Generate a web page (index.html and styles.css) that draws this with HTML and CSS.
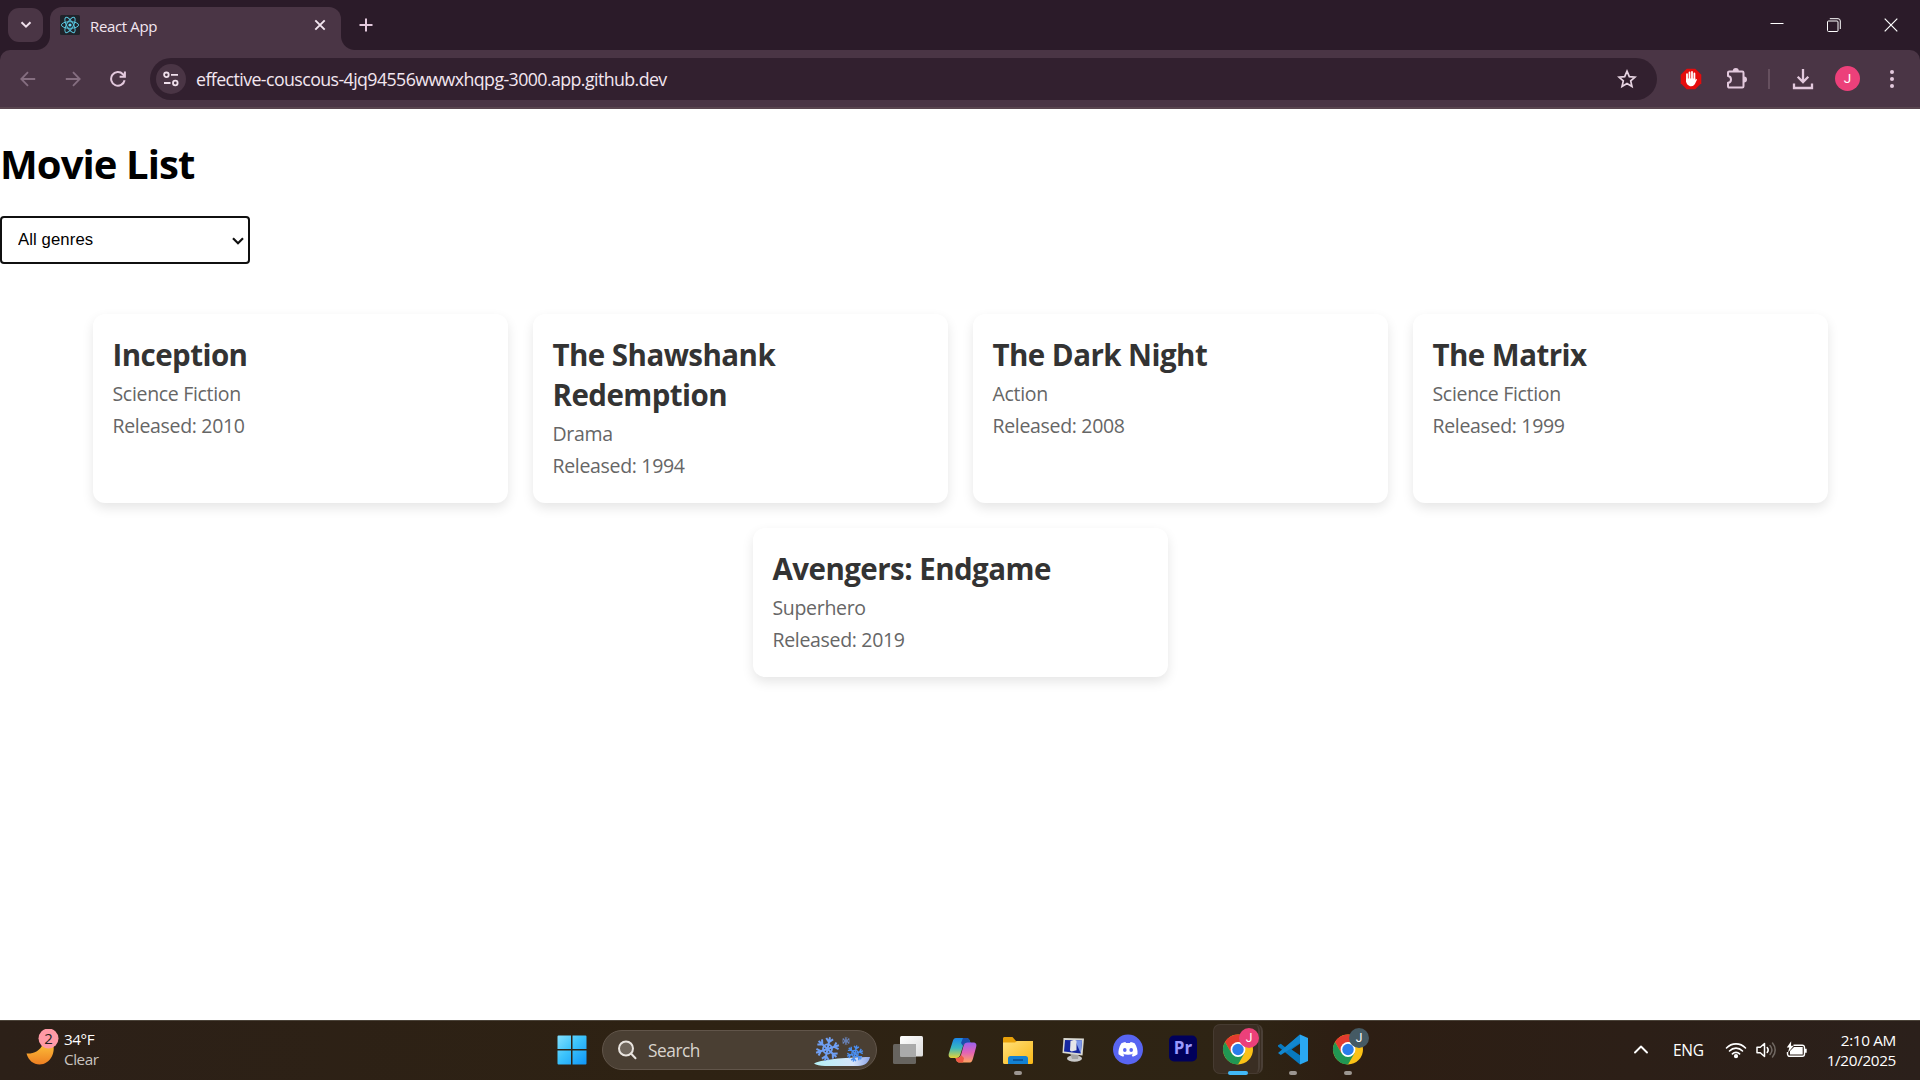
FILE: index.html
```html
<!DOCTYPE html>
<html lang="en">
<head>
<meta charset="utf-8">
<title>React App</title>
<link rel="stylesheet" href="styles.css">
</head>
<body>
<div class="screen">
<header class="tabstrip">
  <div class="tab-search"><svg width="12" height="8" viewBox="0 0 12 8" fill="none" stroke="#f0e0ec" stroke-width="2"><path d="M1.5 1.2 6 5.7l4.5-4.5"/></svg></div>
  <div class="tab">
    <svg class="favicon" width="20" height="20" viewBox="0 0 20 20" fill="none" stroke="#58c4dc"><rect width="20" height="20" rx="1.5" fill="#20232a" stroke="none"/><g stroke-width="1"><ellipse cx="10" cy="10" rx="8.6" ry="3.3"/><ellipse cx="10" cy="10" rx="8.6" ry="3.3" transform="rotate(60 10 10)"/><ellipse cx="10" cy="10" rx="8.6" ry="3.3" transform="rotate(120 10 10)"/></g><circle cx="10" cy="10" r="1.6" fill="#61dafb" stroke="none"/></svg>
    <span class="tab-title">React App</span>
    <svg width="12" height="12" viewBox="0 0 12 12" stroke="#f3e6f0" stroke-width="1.9"><path d="m1.3 1.3 9.4 9.4m0-9.4-9.4 9.4"/></svg>
  </div>
  <svg class="new-tab" width="14" height="14" viewBox="0 0 14 14" stroke="#e3c9dd" stroke-width="2"><path d="M7 .5v13M.5 7h13"/></svg>
  <div class="window-controls">
    <svg width="14" height="14" viewBox="0 0 14 14" stroke="#fff"><path d="M.5 5.500h13"/></svg>
    <svg width="14" height="14" viewBox="0 0 14 14" fill="none" stroke="#fff"><rect x=".5" y="3" width="10.5" height="10.5" rx="1"/><path d="M2.8.7h8.2a2.3 2.3 0 0 1 2.3 2.3v8"/></svg>
    <svg width="14" height="14" viewBox="0 0 14 14" stroke="#fff" stroke-width="1.2"><path d="m.7.7 12.6 12.6m0-12.6L.7 13.3"/></svg>
  </div>
</header>
<nav class="toolbar">
  <svg class="nav-icon" width="16" height="16" viewBox="0 0 16 16" fill="none" stroke="#856e80" stroke-width="1.8"><path d="M15.2 8H1.6M8 1.2 1.3 8 8 14.8"/></svg>
  <svg class="nav-icon" width="16" height="16" viewBox="0 0 16 16" fill="none" stroke="#856e80" stroke-width="1.8"><path d="M.8 8h13.6M8 1.2 14.7 8 8 14.8"/></svg>
  <svg class="nav-icon" width="16" height="16" viewBox="0 0 16 16" fill="none" stroke="#e3c9dd" stroke-width="2"><path d="M14.6 9.2A6.8 6.8 0 1 1 12.9 3.2L14.5 5M14.9.5v5.3H9.6"/></svg>
  <div class="omnibox">
    <div class="site-info"><svg width="16" height="16" viewBox="0 0 16 16" fill="none" stroke="#f0e0ec" stroke-width="1.8"><circle cx="3.4" cy="3.8" r="2.3"/><path d="M8 3.8h7M1 12h6.5"/><circle cx="12.3" cy="12" r="2.3"/></svg></div>
    <span class="url">effective-couscous-4jq94556wwwxhqpg-3000.app.github.dev</span>
    <svg class="star" width="20" height="20" viewBox="0 0 20 20" fill="none" stroke="#e6d3e1" stroke-width="1.7"><path d="m10 2.2 2.3 5.4 5.8.5-4.4 3.8 1.3 5.7-5-3-5 3 1.3-5.7-4.4-3.8 5.8-.5z"/></svg>
  </div>
  <svg class="ext-block" width="22" height="22" viewBox="0 0 22 22"><path d="M6.7.7h8.6l6 6v8.6l-6 6H6.700l-6-6V6.700z" fill="#e40d0d"/><path d="M7 6.200v7M9.500 4.500v8M12 4v8M14.400 5.500v8" stroke="#fff" stroke-width="1.800" stroke-linecap="round"/><path d="M6.100 10.500h9.200v3.200c0 2.800-1.600 4.600-4.300 4.600-2.400 0-4.900-2.500-4.900-5zM14.500 13.500l1.600-2.500 1 .5-2.200 4.500z" fill="#fff"/></svg>
  <svg class="ext-puzzle" width="22" height="22" viewBox="0 0 22 22" fill="none" stroke="#e3c9dd" stroke-width="2" stroke-linejoin="round"><path d="M3.300 3.500h13a1.200 1.200 0 0 1 1.200 1.200v13.600a1.200 1.200 0 0 1-1.200 1.200h-13A1.200 1.200 0 0 1 2 18.300v-3.500c4-.5 4-6.200 0-6.700V4.700a1.200 1.200 0 0 1 1.300-1.200z"/><path d="M7.800 3a2 2 0 0 1 4 0M18 9.500a2 2 0 0 1 0 4" fill="#e3c9dd"/></svg>
  <span class="divider"></span>
  <svg class="download" width="22" height="22" viewBox="0 0 22 22" fill="none" stroke="#e3c9dd" stroke-width="2.300"><path d="M11 1v12.500M5.700 8.800l5.300 5.300 5.300-5.300M2 15.500v4.500h18v-4.500"/></svg>
  <span class="avatar">J</span>
  <svg class="kebab" width="6" height="20" viewBox="0 0 6 20" fill="#e3c9dd"><circle cx="3" cy="3" r="2"/><circle cx="3" cy="10" r="2"/><circle cx="3" cy="17" r="2"/></svg>
</nav>
<main class="page">
  <h1>Movie List</h1>
  <div class="genre">
    <select class="genre-select"><option>All genres</option></select>
    <svg class="genre-arrow" width="12" height="8" viewBox="0 0 12 8" fill="none" stroke="#101010" stroke-width="2.200"><path d="m1 1.200 5 5 5-5"/></svg>
  </div>
  <section class="movies">
    <article class="card"><h2>Inception</h2><p>Science Fiction</p><p>Released: 2010</p></article>
    <article class="card"><h2>The Shawshank Redemption</h2><p>Drama</p><p>Released: 1994</p></article>
    <article class="card"><h2>The Dark Night</h2><p>Action</p><p>Released: 2008</p></article>
    <article class="card"><h2>The Matrix</h2><p>Science Fiction</p><p>Released: 1999</p></article>
    <article class="card"><h2>Avengers: Endgame</h2><p>Superhero</p><p>Released: 2019</p></article>
  </section>
</main>
<footer class="taskbar">
  <div class="weather">
    <svg width="34" height="38" viewBox="0 0 34 38"><defs><linearGradient id="moon" x2="0" y2="1"><stop offset="0" stop-color="#fdc33b"/><stop offset="1" stop-color="#ee7f22"/></linearGradient></defs><path d="M.5 24.500c7 .5 14-3 16-9l10-2c4 9-2 22-13 22-6 0-11-4-13-11z" fill="url(#moon)"/><circle cx="22.500" cy="9.500" r="10" fill="#ff9aa6"/><text class="badge-count" x="22.500" y="15" text-anchor="middle">2</text></svg>
    <div class="weather-text"><span>34°F</span><span class="dim">Clear</span></div>
  </div>
  <div class="apps">
    <svg class="start" width="30" height="30" viewBox="0 0 30 30"><defs><linearGradient id="win" gradientUnits="userSpaceOnUse" x2="30" y2="30"><stop offset="0" stop-color="#86e2ff"/><stop offset=".45" stop-color="#3cc3fb"/><stop offset="1" stop-color="#0d93f7"/></linearGradient></defs><path d="M.5 1.500a1 1 0 0 1 1-1H14V14H.5zM15.500.5h13a1 1 0 0 1 1 1V14h-14zM.5 15.500H14v14H1.500a1 1 0 0 1-1-1zM15.500 15.500h14v13a1 1 0 0 1-1 1h-13z" fill="url(#win)"/></svg>
    <div class="search">
      <svg width="20" height="20" viewBox="0 0 20 20" fill="none" stroke="#e9e4df" stroke-width="2" stroke-linecap="round"><circle cx="9" cy="8.500" r="7" fill="#6f665c"/><path d="m14 13.500 4.500 4.800"/></svg>
      <span>Search</span>
      <svg class="snow" width="58" height="32" viewBox="0 0 58 32" fill="none"><defs><linearGradient id="bank"><stop offset="0" stop-color="#b5f1f7"/><stop offset=".7" stop-color="#d5e4fa"/><stop offset="1" stop-color="#8ea6e8"/></linearGradient><g id="snowflake"><path id="arm" d="M0-12V12M-3.500-10.500 0-7l3.500-3.500M-3.500 10.500 0 7l3.500 3.500" stroke-width="2"/><use href="#arm" transform="rotate(60)"/><use href="#arm" transform="rotate(120)"/><circle r="4.500" stroke-width="1.800"/></g></defs><path d="M1 27.500c10-5 35-6 56-6.500-1 5-5 9-12 9H12c-5 0-9-1-11-2.500z" fill="url(#bank)"/><use href="#snowflake" transform="translate(14.500 13) rotate(12)" stroke="#6f9ff3"/><use href="#snowflake" transform="translate(42 17.500) rotate(12) scale(.7)" stroke="#4b8ff0"/><use href="#snowflake" transform="translate(33 5) scale(.34)" stroke="#6f8fd0"/></svg>
    </div>
    <svg class="app" width="32" height="32" viewBox="0 0 32 32"><defs><linearGradient id="pane" x2="1" y2="1"><stop offset="0" stop-color="#fff"/><stop offset="1" stop-color="#dcdcdc"/></linearGradient></defs><rect x="1" y="10" width="23" height="20" rx="1.500" fill="#67645f"/><rect x="8" y="2" width="23" height="20.500" rx="1.500" fill="url(#pane)"/><path d="M8 10h16v12.500H8z" fill="#aaa"/></svg>
    <svg class="app" width="32" height="32" viewBox="0 0 32 32"><defs><linearGradient id="cpa" x2="0" y2="1"><stop offset="0" stop-color="#1a86ea"/><stop offset=".5" stop-color="#38b8c0"/><stop offset="1" stop-color="#e5d338"/></linearGradient><linearGradient id="cpb" x2="0" y2="1"><stop offset="0" stop-color="#9a62ef"/><stop offset=".5" stop-color="#e363b6"/><stop offset="1" stop-color="#ffa461"/></linearGradient></defs><path d="M9 4h10c3 0 3.500 1.500 4.500 5h-4c-2 0-3 1-3.500 3l-2.500 8c-.7 2.500-2 4-4.500 4H5c-3 0-4-2-3-5L5.500 8C6.300 5.500 7 4 9 4z" fill="url(#cpa)"/><path d="M16 4h3c3 0 3.500 1.500 4.500 5h-4c-2 0-3 1-3.500 3l-2-3z" fill="#194fae"/><path d="M23 28.500H13c-3 0-3.500-1.500-4.500-4.500h1.500c2 0 3.500-1 4-3l2.500-9c.7-2.500 2-3.500 4.500-3.500H26c3 0 4 1.500 3 5L26 24.500c-.8 2.500-1.500 4-3 4z" fill="url(#cpb)"/><path d="M16 28.500h-3c-3 0-3.500-1.500-4.500-4.500h1.500c2 0 3.500-1 4-3l3 3z" fill="#ef5945"/></svg>
    <div class="app running"><svg width="32" height="32" viewBox="0 0 32 32"><defs><linearGradient id="folder" x2="1" y2="1"><stop offset="0" stop-color="#ffe07a"/><stop offset="1" stop-color="#f9b816"/></linearGradient></defs><path d="M1 4.500C1 3.600 1.600 3 2.500 3h8l3.500 4H30v9H1z" fill="#e8a10a"/><path d="M1 8.500h12l2-1.500h16v21.500a1.500 1.500 0 0 1-1.500 1.500h-27A1.500 1.500 0 0 1 1 28.500z" fill="url(#folder)"/><path d="M6 30v-5.500a2.500 2.500 0 0 1 2.500-2.500h15a2.500 2.500 0 0 1 2.500 2.500V30z" fill="#1281d3"/><path d="M11 26h10" stroke="#0b4f92" stroke-width="1.600"/></svg></div>
    <svg class="app" width="32" height="32" viewBox="0 0 32 32"><ellipse cx="17.500" cy="24.500" rx="7.500" ry="3.200" fill="#c9c9c9"/><path d="M13 19h9l-1 6h-6z" fill="#a4a4a4"/><path d="m6.500 4 20.500.500-1.500 17L5.500 19z" fill="#d9d9d3"/><path d="m8 6 17 .5-1.200 13L7 17.500z" fill="#1527a0"/><path d="m18 6.200 7 .3-1.200 13z" fill="#7d98ea"/><path d="m13.500 7 4-1.200 2 1v9.500l-5 1.200-1.500-1z" fill="#e6e6e8"/></svg>
    <svg class="app" width="32" height="32" viewBox="0 0 32 32"><circle cx="16" cy="15.500" r="15" fill="#5865f2"/><path d="M22.600 9.200a16 16 0 0 0-4-1.200l-.6 1.100a15 15 0 0 0-4 0L13.400 8a16 16 0 0 0-4 1.200C6.900 13 6.200 16.700 6.500 20.300a16 16 0 0 0 4.800 2.400l1.100-1.900-1.600-.8.4-.3c3 1.400 6.600 1.400 9.600 0l.4.3-1.600.8 1.100 1.900a16 16 0 0 0 4.800-2.400c.4-4.200-.7-7.800-2.900-11.100z" fill="#fff"/><ellipse cx="12.800" cy="16" rx="1.800" ry="2" fill="#5865f2"/><ellipse cx="19.200" cy="16" rx="1.800" ry="2" fill="#5865f2"/></svg>
    <svg class="app" width="32" height="32" viewBox="0 0 32 32"><rect x="2" y="1.500" width="28" height="26" rx="5" fill="#00005b"/><text class="premiere" x="16" y="19.500" text-anchor="middle">Pr</text></svg>
    <div class="app running active"><svg width="32" height="32" viewBox="0 0 32 32"><g id="chrome"><circle cx="16" cy="15.500" r="15" fill="#fbc116"/><path d="M3 8A15 15 0 0 1 29 8H16l-6.500 11.300z" fill="#e33b2e"/><path d="M3 8A15 15 0 0 0 16 30.500l6.500-11.300-13 0z" fill="#219653"/><circle cx="16" cy="15.500" r="7.400" fill="#fff"/><circle cx="16" cy="15.500" r="5.700" fill="#2b7de9"/></g></svg><span class="profile pink">J</span></div>
    <div class="app running"><svg width="32" height="32" viewBox="0 0 32 32"><path d="M23 .5 8.500 13.500 3.800 9.800 1 11.200v1.300L23 30.500l1-8.500-9.500-6.500 9.500-6.500z" fill="#0879bf"/><path d="m1 19 2.800 2L24 8 23 .5z" fill="#1287cf"/><path d="M23 .5 31 4v23l-8 3.500z" fill="#2aa8f2"/></svg></div>
    <div class="app running"><svg width="32" height="32" viewBox="0 0 32 32"><use href="#chrome"/></svg><span class="profile slate">J</span></div>
  </div>
  <div class="tray">
    <svg class="chevron" width="14" height="9" viewBox="0 0 14 9" fill="none" stroke="#fff" stroke-width="1.900" stroke-linecap="round" stroke-linejoin="round"><path d="m1 7.500 6-6 6 6"/></svg>
    <span class="lang">ENG</span>
    <svg class="wifi" width="22" height="18" viewBox="0 0 22 18" fill="none" stroke="#fff" stroke-width="1.600" stroke-linecap="round"><path d="M1.500 7c5.200-5.500 13.800-5.500 19 0M4.500 10c3.600-3.800 9.400-3.800 13 0M7.400 12.900c2-2.100 5.200-2.100 7.200 0"/><circle cx="11" cy="15.200" r="1.300" fill="#fff"/></svg>
    <svg class="volume" width="20" height="18" viewBox="0 0 20 18" fill="none" stroke="#fff" stroke-width="1.500" stroke-linejoin="round" stroke-linecap="round"><path d="M1 6.200h3.300L8.500 2.500v13L4.300 11.800H1zM11.200 6.500c1.200 1.500 1.200 3.500 0 5"/><path d="M14 4.500c2.400 2.700 2.400 6.300 0 9M16.500 2c3.600 4.200 3.600 9.800 0 14" stroke="#716963"/></svg>
    <svg class="battery" width="22" height="18" viewBox="0 0 22 18" fill="none" stroke="#fff" stroke-width="1.400"><path d="M7.500 4.200h8.800a2.200 2.200 0 0 1 2.200 2.200v6.700a2.200 2.200 0 0 1-2.200 2.200H3.700a2.200 2.200 0 0 1-2.200-2.200v-2"/><path d="M8 6h8.700v7.500H4V10z" fill="#fff" stroke="none"/><path d="M19 7.700h1.700v4H19z" fill="#fff" stroke="none"/><path d="M5.200.3.800 6.500h2.500L2 11.500l5.800-6.700H5z" fill="#fff" stroke="none"/></svg>
    <div class="clock"><span class="time">2:10 AM</span><span class="date">1/20/2025</span></div>
  </div>
</footer>
</div>
</body>
</html>
```
FILE: styles.css
```css
*, *::before, *::after { box-sizing: border-box; }
body { margin: 0; background: #fff; font-family: "Open Sans", "Noto Sans", sans-serif; }
svg { display: block; flex: none; }
.screen { width: 1920px; height: 1080px; display: flex; flex-direction: column; overflow: hidden; background: #2b1b29; }

.tabstrip { height: 50px; flex: none; display: flex; align-items: center; background: #2b1b29; padding-left: 8px; }
.tab-search { width: 35px; height: 34px; border-radius: 11px; background: #4a3545; display: flex; align-items: center; justify-content: center; margin-right: 7px; }
.tab { position: relative; width: 291px; height: 43px; align-self: flex-end; background: #4a3545; border-radius: 12px 12px 0 0; display: flex; align-items: center; padding: 0 15px 7px 10px; }
.tab::before, .tab::after { content: ""; position: absolute; bottom: 0; width: 14px; height: 14px; }
.tab::before { left: -14px; background: radial-gradient(circle at 0 0, transparent 13.5px, #4a3545 14.5px); }
.tab::after { right: -14px; background: radial-gradient(circle at 100% 0, transparent 13.5px, #4a3545 14.5px); }
.tab-title { flex: 1; margin-left: 10px; padding-top: 1px; font-size: 15px; color: #f3e6f0; letter-spacing: -.35px; }
.new-tab { margin-left: 18px; }
.window-controls { margin-left: auto; margin-right: 22px; display: flex; gap: 43px; }

.toolbar { height: 59px; flex: none; display: flex; align-items: center; background: #4a3545; border-bottom: 2px solid #59454f; border-radius: 10px 10px 0 0; padding: 0 12px 0 20px; }
.nav-icon { margin-right: 29px; }
.omnibox { width: 1507px; height: 42px; border-radius: 21px; background: #32202f; display: flex; align-items: center; padding: 0 20px 0 6px; margin-left: -5px; }
.site-info { width: 30px; height: 30px; border-radius: 50%; background: #4a3545; display: flex; align-items: center; justify-content: center; }
.url { flex: 1; margin-left: 10px; padding-top: 1px; font-size: 17.800px; color: #f3e6f0; letter-spacing: -.59px; white-space: nowrap; }
.ext-block { margin-left: 23px; }
.ext-puzzle { margin-left: 24px; }
.divider { width: 2px; height: 20px; background: #66505f; margin-left: 20px; }
.download { margin-left: 22px; }
.avatar { width: 25px; height: 25px; border-radius: 50%; background: #ec407a; color: #fff; font: 13.500px/25px Roboto, sans-serif; text-align: center; margin-left: 21px; }
.kebab { margin-left: 29px; }

.page { flex: 1; min-height: 0; background: #fff; }
h1 { margin: 28px 0 25px; font-size: 40px; line-height: 54px; font-weight: 700; color: #000; letter-spacing: -.9px; }
.genre { position: relative; width: 250px; height: 48px; }
.genre-select { appearance: none; display: block; width: 100%; height: 100%; border: 2px solid #101010; border-radius: 4px; background: #fff; font: 16.700px "Liberation Sans", Arial, sans-serif; color: #000; letter-spacing: .1px; padding: 0 0 2px 16px; outline: none; }
.genre-arrow { position: absolute; right: 6px; top: 21px; }
.movies { display: flex; flex-wrap: wrap; justify-content: center; gap: 25px; padding: 50px 0 0; }
.card { width: 415px; padding: 21px 20px 21px; border-radius: 12px; background: #fff; box-shadow: 0 5px 12px rgba(0, 0, 0, .1); }
.card h2 { margin: 0 0 3px; font-size: 29.500px; line-height: 40px; color: #333; letter-spacing: -.55px; }
.card p { margin: 0; font-size: 19.500px; line-height: 32px; color: #666; letter-spacing: -.32px; }

.taskbar { height: 60px; flex: none; display: flex; align-items: center; justify-content: space-between; background: linear-gradient(90deg, #2c2018, #2e2213 35%, #2e2414 65%, #2d1e13 70%, #2b201b); border-top: 1px solid #4b4339; color: #fff; }
.weather { width: 540px; display: flex; padding: 0 0 3px 26px; }
.weather-text { display: flex; flex-direction: column; font-size: 15.300px; line-height: 20px; margin-left: 4px; letter-spacing: -.45px; }
.dim { color: #c9c4c0; }
.badge-count { font-size: 15px; fill: #222; }
.apps { display: flex; align-items: center; flex: 1; padding-bottom: 1px; }
.start { margin-left: 17px; }
.search { width: 275px; height: 40px; margin: 0 15px; border-radius: 20px; border: 1px solid #61554a; background: #4a3f33; display: flex; align-items: center; padding: 0 5px 0 14px; font-size: 17.300px; color: #d9d4ce; letter-spacing: -.45px; }
.search span { margin-left: 11px; padding-top: 1px; flex: 1; }
.snow { margin-top: 3px; }
.app { width: 32px; height: 32px; margin-right: 23px; position: relative; flex: none; }
.app > svg { position: relative; }
.premiere { font-size: 17px; font-weight: 700; fill: #9999ff; }
.running::after { content: ""; position: absolute; left: 12px; bottom: -9px; width: 8px; height: 4px; border-radius: 2px; background: #9c9691; }
.active::before { content: ""; position: absolute; left: -9px; top: -10px; width: 50px; height: 50px; border-radius: 7px; background: #3a2e23; border: 1px solid #463b31; border-right: 5px double #4a3f36; }
.active::after { left: 6px; width: 20px; background: #41b9f7; }
.profile { position: absolute; left: 17px; top: -6px; width: 20px; height: 20px; border-radius: 50%; font: 12px/20px Roboto, sans-serif; text-align: center; }
.pink { background: #ec407a; }
.slate { background: #455a64; }
.tray { display: flex; align-items: center; padding: 0 24px 2px 0; }
.lang { font-size: 15.500px; margin: 0 21px 0 25px; padding-top: 1px; letter-spacing: -.3px; }
.volume { margin: 0 10px 0 9px; }
.clock { display: flex; flex-direction: column; align-items: flex-end; font-size: 15.300px; line-height: 20px; margin-left: 19px; letter-spacing: -.35px; }
```
